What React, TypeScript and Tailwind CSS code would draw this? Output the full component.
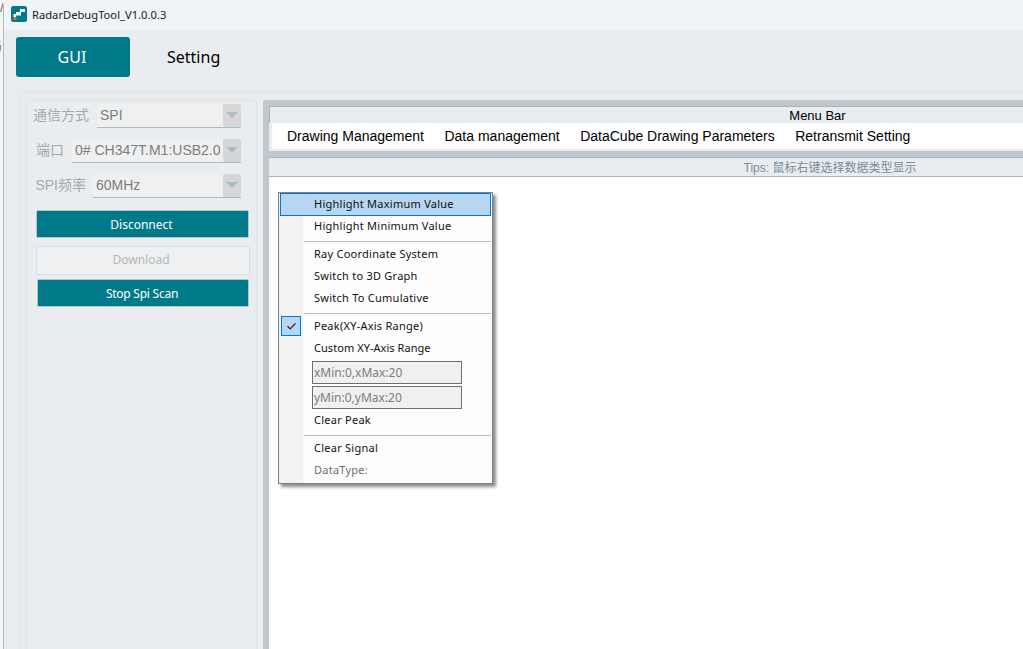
import React from "react";
import { Check } from "lucide-react";

const sans = "font-['Liberation_Sans','Noto_Sans_CJK_SC',sans-serif]";
const ui = "font-['Noto_Sans','Noto_Sans_CJK_SC',sans-serif]";

function FormRow({ label, value, labelClass, selectClass }: { label: string; value: string; labelClass: string; selectClass: string }) {
  return (
    <div className="flex h-[23px] items-center justify-end">
      <span className={`text-[14px] text-[#a3a9ad] ${labelClass}`}>{label}</span>
      <div className={`flex h-[24px] items-stretch border-b border-[#aebac2] bg-[#f0f0f0] ${selectClass}`}>
        <span className="flex-1 overflow-hidden whitespace-nowrap pl-[3px] text-[14px] leading-[23px] text-[#787f84]">{value}</span>
        <span className="flex w-[18px] items-center justify-center rounded-[2px] bg-[#d6d6d6]">
          <span className="h-0 w-0 border-x-[6px] border-t-[6px] border-x-transparent border-t-[#a9bcc8]" />
        </span>
      </div>
    </div>
  );
}

function TealButton({ label, className }: { label: string; className: string }) {
  return (
    <button className={`flex items-center justify-center rounded-[2px] border border-[#b5c3ca] bg-[#007a88] pt-[1px] text-[12px] text-white ${ui} ${className}`}>
      {label}
    </button>
  );
}

function MenuItem({ label, muted, className = "h-[22px]" }: { label: string; muted?: boolean; className?: string }) {
  return (
    <div className={`flex items-center pl-[35px] ${className} ${muted ? "text-[#6d6d6d]" : "text-[#111]"}`}>{label}</div>
  );
}

function MenuSep() {
  return (
    <div className="h-[6px] pl-[25px] pr-[1px] pt-[4px]">
      <div className="h-px w-full bg-[#bdbdbd]" />
    </div>
  );
}

function ContextMenu() {
  return (
    <div className={`absolute left-[278px] top-[192px] h-[292px] w-[215px] border border-[#7b8285] bg-[linear-gradient(to_right,#f2f2f2_24px,#fdfdfd_24px)] shadow-[3px_3px_3px_rgba(0,0,0,0.45)] ${ui} text-[11px] tracking-[0.25px]`}>
      <div className="mx-[1px] flex h-[23px] items-center border border-[#0078d7] bg-[#b6d6f1] pl-[33px] text-[#111]">Highlight Maximum Value</div>
      <MenuItem label="Highlight Minimum Value" className="h-[21px]" />
      <MenuSep />
      <MenuItem label="Ray Coordinate System" />
      <MenuItem label="Switch to 3D Graph" />
      <MenuItem label="Switch To Cumulative" />
      <MenuSep />
      <div className="flex h-[22px] items-center text-[#111]">
        <span className="ml-[2px] mr-[13px] flex h-[20px] w-[20px] items-center justify-center border border-[#0078d7] bg-[#b6d6f1]">
          <Check size={11} strokeWidth={2.5} className="text-[#222]" />
        </span>
        Peak(XY-Axis Range)
      </div>
      <MenuItem label="Custom XY-Axis Range" className="h-[22px] tracking-[0.05px]" />
      <div className="ml-[33px] mt-[2px] flex h-[23px] w-[150px] items-center border border-[#6e6e6e] bg-[#f0f0f0] pl-[1px] text-[12px] tracking-normal text-[#7c7c7c]">xMin:0,xMax:20</div>
      <div className="ml-[33px] mt-[2px] flex h-[23px] w-[150px] items-center border border-[#6e6e6e] bg-[#f0f0f0] pl-[1px] text-[12px] tracking-normal text-[#7c7c7c]">yMin:0,yMax:20</div>
      <MenuItem label="Clear Peak" />
      <MenuSep />
      <MenuItem label="Clear Signal" />
      <MenuItem label="DataType:" muted />
    </div>
  );
}

export default function App() {
  return (
    <div className={`relative flex h-[649px] w-[1023px] overflow-hidden bg-white ${sans}`}>
      {/* desktop sliver behind the window */}
      <div className="flex w-[3px] shrink-0 flex-col overflow-hidden bg-[#f6f6f6] text-[13px] leading-none text-[#666]">
        <span className="mt-[1px] h-[38px] whitespace-nowrap">/</span>
        <span className="ml-[-11px] w-[14px]">局</span>
      </div>

      <div className="flex min-w-0 flex-1 flex-col rounded-tl-[6px] border-l border-[#b4b8bb]">
        {/* title bar */}
        <div className={`flex h-[30px] shrink-0 items-center rounded-tl-[6px] bg-[#eff4f9] pl-[7px] text-[11.2px] text-[#1a1a1a] ${ui}`}>
          <svg width="16" height="16" viewBox="0 0 16 16" className="mb-[2px] mr-[5px]">
            <rect width="16" height="16" rx="2.5" fill="#00798a" />
            <rect x="9" y="3" width="5" height="3" fill="#fff" />
            <rect x="5" y="6" width="5" height="3.5" fill="#fff" />
            <rect x="2.5" y="8" width="2.5" height="3" fill="#fff" />
            <rect x="2.5" y="11" width="3" height="3" fill="#e8682c" />
          </svg>
          RadarDebugTool_V1.0.0.3
        </div>

        <div className="flex min-h-0 flex-1 flex-col bg-[#e9edf0]">
          {/* tabs */}
          <div className={`flex h-[62px] shrink-0 pl-[12px] pt-[7px] text-[16px] ${ui}`}>
            <div className="flex h-[40px] w-[114px] items-center justify-center rounded-[3px] bg-[#007a88] pr-[2px] text-white">GUI</div>
            <div className="flex h-[40px] items-center pl-[37px] text-black">Setting</div>
          </div>

          <div className="flex min-h-0 flex-1 pl-[16px]">
            {/* left group */}
            <div className="w-[243px] shrink-0 rounded-tl-[4px] border-l border-t border-[#dfe4e7] pl-[5px] pt-[7px]">
              <div className="h-full w-[231px] rounded-t-[4px] border-x border-t border-[#dfe4e7] pt-[3px]">
                <div className="flex w-[214px] flex-col gap-[12px]">
                  <FormRow label="通信方式" value="SPI" labelClass="mr-[8px]" selectClass="w-[144px]" />
                  <FormRow label="端口" value="0# CH347T.M1:USB2.0" labelClass="mr-[8px]" selectClass="w-[169px]" />
                  <FormRow label="SPI频率" value="60MHz" labelClass="mr-[7px]" selectClass="w-[148px]" />
                </div>
                <div className="ml-[9px] mt-[13px] flex w-[214px] flex-col">
                  <TealButton label="Disconnect" className="h-[28px] w-[213px] pr-[2px]" />
                  <button className={`mt-[8px] flex h-[29px] w-[214px] items-center justify-center border border-[#dcdfe1] bg-[#eff0f1] pb-[1px] pr-[4px] text-[12px] text-[#b4b8bb] ${ui}`}>Download</button>
                  <TealButton label="Stop Spi Scan" className="ml-[1px] mt-[4px] h-[28px] w-[212px] pr-[2px] tracking-[-0.25px]" />
                </div>
              </div>
            </div>

            {/* right panel */}
            <div className="flex min-w-0 flex-1 flex-col border-t-[1px] border-[#dfe4e7]">
              <div className="h-[7px] shrink-0" />
              <div className="flex min-h-0 flex-1 flex-col rounded-tl-[3px] bg-[#bfc8ce] pl-[6px] pt-[6px]">
                <div className="flex h-[17px] shrink-0 items-center justify-center rounded-tl-[2px] border-l border-t border-[#a9b4ba] bg-[#e9edf0] pl-[342px] pt-[1px] text-[13px] text-black">Menu Bar</div>
                <div className="shrink-0 bg-[#e9edf0] pl-[3px]">
                  <div className="flex h-[26px] items-center gap-[20.5px] bg-white pl-[15px] pt-[1px] text-[14px] text-black">
                    <span>Drawing Management</span>
                    <span>Data management</span>
                    <span>DataCube Drawing Parameters</span>
                    <span>Retransmit Setting</span>
                  </div>
                </div>
                <div className="h-[8px] shrink-0 border-t-[2px] border-[#e9edf0]" />
                <div className="flex h-[20px] shrink-0 items-center justify-center border-b border-t border-[#aab4ba] bg-[#e9edf0] pl-[368px] pt-[1px] text-[12px] text-[#7a8c98]">Tips: 鼠标右键选择数据类型显示</div>
                <div className="flex-1 bg-white" />
              </div>
            </div>
          </div>
        </div>
      </div>

      <ContextMenu />
    </div>
  );
}
